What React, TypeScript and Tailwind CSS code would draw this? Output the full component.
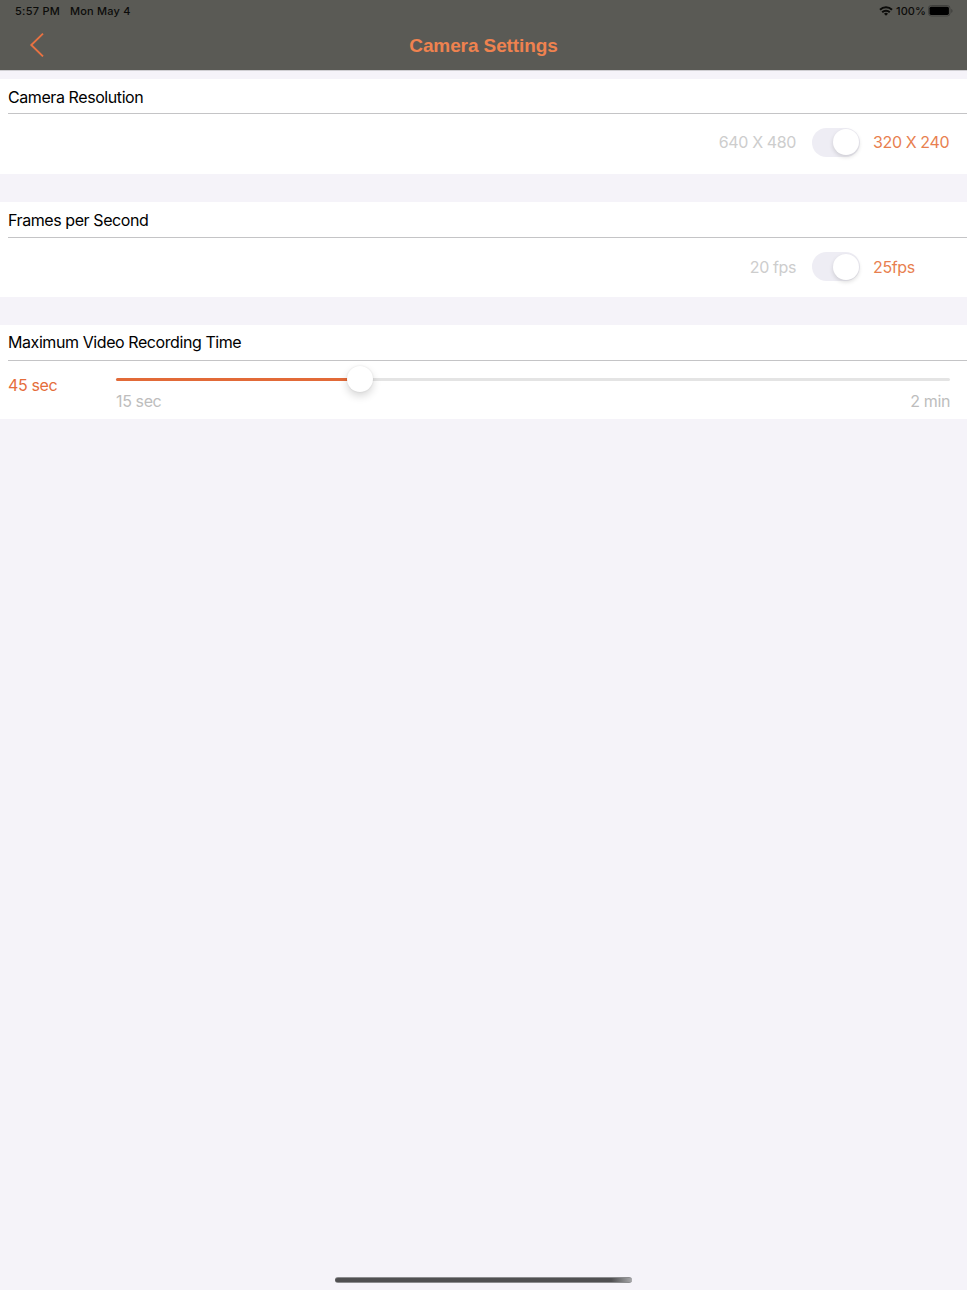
import { useState, type ReactNode } from "react";

const MIN_SECONDS = 15;
const MAX_SECONDS = 120;

function StatusBar() {
  return (
    <div className="flex h-[22px] items-center justify-between pr-[14px] pl-[15px] text-[11px] leading-[22px] font-medium text-[#0c0c0a]">
      <div className="flex gap-[10px]">
        <span className="tracking-[0.25px]">5:57 PM</span>
        <span className="tracking-[0.2px]">Mon May 4</span>
      </div>
      <div className="flex items-center">
        <svg width="14" height="10" viewBox="0 0 14 10" fill="none" stroke="#0c0c0a" strokeWidth="2">
          <path d="M1 3.8a8.6 8.6 0 0 1 12 0" />
          <path d="M3.2 6.3a5.4 5.4 0 0 1 7.6 0" />
          <path d="M7 9.8 5 7.8a2.9 2.9 0 0 1 4 0Z" fill="#0c0c0a" stroke="none" />
        </svg>
        <span className="ml-[3px] w-[31px] tracking-[0.1px]">100%</span>
        <svg className="ml-px" width="25" height="12" viewBox="0 0 25 12">
          <rect x="0.5" y="0.5" width="21.5" height="10.5" rx="2.8" fill="none" stroke="#41413e" />
          <rect x="1.5" y="1.7" width="19.4" height="8.2" rx="1.6" fill="#000" />
          <path d="M23.2 4v3.8c.9-.4 1.3-1 1.3-1.9s-.4-1.5-1.3-1.9Z" fill="#41413e" />
        </svg>
      </div>
    </div>
  );
}

function Section({ title, className, children }: { title: string; className: string; children: ReactNode }) {
  return (
    <section className={`flex flex-col bg-white ${className}`}>
      <h2 className="ml-2 h-[36px] border-b border-[#c4c4c6] text-[16px] leading-[36px] tracking-[-0.42px] text-black">
        {title}
      </h2>
      {children}
    </section>
  );
}

interface ToggleRowProps {
  off: string;
  on: string;
  checked: boolean;
  className: string;
  onToggle: () => void;
}

function ToggleRow({ off, on, checked, className, onToggle }: ToggleRowProps) {
  return (
    <div className={`flex flex-1 items-center justify-end text-[16px] tracking-[-0.38px] ${className}`}>
      <span className={checked ? "text-[#cdcdcd]" : "text-[#e87f50]"}>{off}</span>
      <button
        role="switch"
        aria-checked={checked}
        aria-label={`${off} / ${on}`}
        onClick={onToggle}
        className={`mr-[13px] ml-4 flex h-[29px] w-[48px] items-center rounded-full bg-[#eeedf4] px-[1.5px] ${checked ? "justify-end" : "justify-start"}`}
      >
        <span className="size-[26px] rounded-full bg-white shadow-[0_2px_4px_rgba(0,0,0,0.14)]" />
      </button>
      <span className={`w-[94px] ${checked ? "text-[#e87f50]" : "text-[#cdcdcd]"}`}>{on}</span>
    </div>
  );
}

export default function App() {
  const [lowRes, setLowRes] = useState(true);
  const [highFps, setHighFps] = useState(true);
  const [seconds] = useState(45);

  // the thumb stays fully inside the track at both ends
  const progress = (seconds - MIN_SECONDS) / (MAX_SECONDS - MIN_SECONDS);
  const thumbLeft = `calc(${progress * 100}% + ${(0.5 - progress) * 26}px)`;

  return (
    <div className="flex h-[1290px] w-[967px] flex-col overflow-hidden bg-[#f5f3f9] font-['Inter',sans-serif]">
      <header className="h-[71px] border-b border-[#cfced2] bg-[#5a5a55]">
        <StatusBar />
        <div className="grid h-12 grid-cols-[100px_1fr_100px] items-center">
          <button aria-label="Back" className="ml-[29px] w-4">
            <svg className="mb-[3px]" width="16" height="25" viewBox="0 0 16 25" fill="none" stroke="#e87242" strokeWidth="1.9">
              <path d="M14 1.6 2.3 13 14 24.4" />
            </svg>
          </button>
          <h1 className="pb-px text-center font-['Liberation_Sans',sans-serif] text-[19px] leading-[46px] font-bold tracking-[-0.1px] text-[#ef824f]">
            Camera Settings
          </h1>
        </div>
      </header>

      <Section title="Camera Resolution" className="mt-[8px] h-[95px] [&>h2]:h-[35px]">
        <ToggleRow off="640 X 480" on="320 X 240" checked={lowRes} className="pb-[4px]" onToggle={() => setLowRes(!lowRes)} />
      </Section>

      <Section title="Frames per Second" className="mt-[28px] h-[95px]">
        <ToggleRow off="20 fps" on="25fps" checked={highFps} className="pb-[2px]" onToggle={() => setHighFps(!highFps)} />
      </Section>

      <Section title="Maximum Video Recording Time" className="mt-[28px] h-[94px] [&>h2]:leading-[35px]">
        <div className="flex flex-1 pl-2 text-[16px] tracking-[-0.38px]">
          <span className="w-[108px] pt-[12px] leading-6 text-[#e56d3b]">{seconds} sec</span>
          <div className="mr-[17px] flex-1">
            <div className="relative mt-[17px] h-[3px] rounded-full bg-[#e4e4e4]">
              <div className="h-full rounded-full bg-[#e26a38]" style={{ width: thumbLeft }} />
              <div
                className="absolute -top-[12px] size-[26px] -translate-x-1/2 rounded-full bg-white shadow-[0_4px_8px_rgba(0,0,0,0.16),0_0_2px_rgba(0,0,0,0.1)]"
                style={{ left: thumbLeft }}
              />
            </div>
            <div className="mt-[8px] flex justify-between leading-6 text-[#bdbdbd]">
              <span>15 sec</span>
              <span>2 min</span>
            </div>
          </div>
        </div>
      </Section>

      <div className="mt-auto mb-[7px] h-[6px] w-[297px] self-center rounded-full border-y border-[#8c8c8f] bg-linear-to-r from-[#505052] from-93% to-[#aaaaad]" />
    </div>
  );
}
